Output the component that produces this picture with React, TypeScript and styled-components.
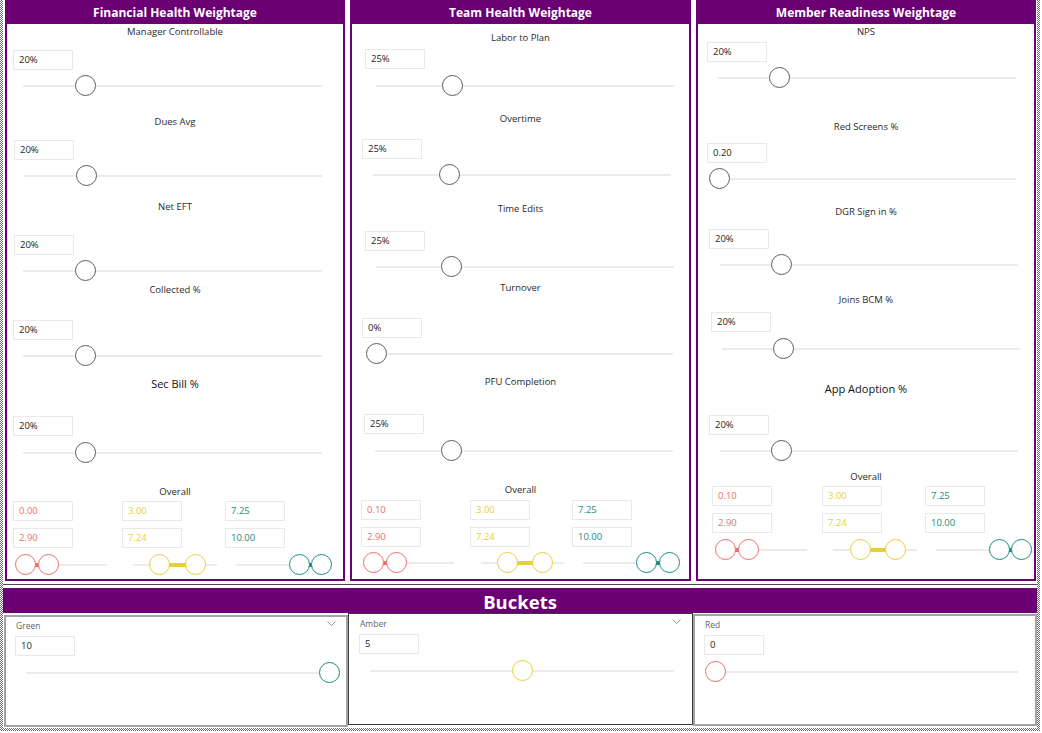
import React from "react";
import styled, { createGlobalStyle } from "styled-components";

const PURPLE = "#6b0073";
const RED = "#ec6f6b";
const YELLOW = "#e7cf3a";
const TEAL = "#1a8c80";
const FONT = `"Segoe UI", "Open Sans", "Liberation Sans", sans-serif`;

const GlobalStyle = createGlobalStyle`
  html, body {
    margin: 0;
    background: #fff;
    font-family: ${FONT};
  }
`;

type Slicer = {
  label: string;
  value: string;
  big?: boolean;
  labelY: number;
  boxX: number;
  boxY: number;
  trackY: number;
  x1: number;
  x2: number;
  thumb: number;
};

type Range = { x1: number; x2: number; lo: number; hi: number; color: string };

type Overall = {
  labelY: number;
  rows: [number, number];
  cols: number[];
  rangeY: number;
  values: [string, string][];
  ranges: Range[];
};

type PanelData = { title: string; x: number; slicers: Slicer[]; overall: Overall };

const s = (
  label: string,
  value: string,
  labelY: number,
  boxX: number,
  boxY: number,
  trackY: number,
  x1: number,
  x2: number,
  thumb: number,
  big = false
): Slicer => ({ label, value, labelY, boxX, boxY, trackY, x1, x2, thumb, big });

const panels: PanelData[] = [
  {
    title: "Financial Health Weightage",
    x: 5,
    slicers: [
      s("Manager Controllable", "20%", 32, 13, 50, 86, 23, 322, 85),
      s("Dues Avg", "20%", 122, 14, 140, 176, 24, 322, 86),
      s("Net EFT", "20%", 207, 14, 235, 271, 23, 322, 85),
      s("Collected %", "20%", 290, 13, 320, 356, 23, 322, 85),
      s("Sec Bill %", "20%", 384, 13, 416, 453, 23, 322, 85, true),
    ],
    overall: {
      labelY: 492,
      rows: [501, 528],
      cols: [13, 122, 225],
      rangeY: 565,
      values: [
        ["0.00", "2.90"],
        ["3.00", "7.24"],
        ["7.25", "10.00"],
      ],
      ranges: [
        { x1: 25, x2: 107, lo: 25, hi: 48, color: RED },
        { x1: 133, x2: 217, lo: 159, hi: 195, color: YELLOW },
        { x1: 236, x2: 299, lo: 299, hi: 321, color: TEAL },
      ],
    },
  },
  {
    title: "Team Health Weightage",
    x: 350,
    slicers: [
      s("Labor to Plan", "25%", 38, 365, 49, 86, 376, 674, 452),
      s("Overtime", "25%", 119, 362, 139, 175, 373, 671, 449),
      s("Time Edits", "25%", 209, 365, 231, 267, 376, 674, 451),
      s("Turnover", "0%", 288, 362, 318, 354, 376, 673, 376),
      s("PFU Completion", "25%", 382, 364, 414, 451, 375, 673, 451),
    ],
    overall: {
      labelY: 490,
      rows: [500, 527],
      cols: [361, 470, 572],
      rangeY: 563,
      values: [
        ["0.10", "2.90"],
        ["3.00", "7.24"],
        ["7.25", "10.00"],
      ],
      ranges: [
        { x1: 373, x2: 454, lo: 373, hi: 396, color: RED },
        { x1: 481, x2: 564, lo: 507, hi: 542, color: YELLOW },
        { x1: 583, x2: 646, lo: 646, hi: 669, color: TEAL },
      ],
    },
  },
  {
    title: "Member Readiness Weightage",
    x: 696,
    slicers: [
      s("NPS", "20%", 32, 707, 42, 78, 718, 1016, 779),
      s("Red Screens %", "0.20", 127, 707, 143, 179, 718, 1016, 719),
      s("DGR Sign in %", "20%", 212, 709, 229, 265, 720, 1018, 781),
      s("Joins BCM %", "20%", 300, 711, 312, 349, 722, 1020, 783),
      s("App Adoption %", "20%", 389, 709, 415, 451, 720, 1018, 781, true),
    ],
    overall: {
      labelY: 477,
      rows: [486, 513],
      cols: [712, 822, 925],
      rangeY: 550,
      values: [
        ["0.10", "2.90"],
        ["3.00", "7.24"],
        ["7.25", "10.00"],
      ],
      ranges: [
        { x1: 725, x2: 807, lo: 725, hi: 748, color: RED },
        { x1: 833, x2: 917, lo: 860, hi: 895, color: YELLOW },
        { x1: 936, x2: 999, lo: 999, hi: 1021, color: TEAL },
      ],
    },
  },
];

const buckets = [
  { name: "Green", value: "10", color: TEAL, pos: 1, chevron: true, top: 2, border: "2px solid #a3a3a3", width: 344 },
  { name: "Amber", value: "5", color: YELLOW, pos: 0.5, chevron: true, top: 0, border: "1px solid #3a3a3a", width: 345 },
  { name: "Red", value: "0", color: RED, pos: 0, chevron: false, top: 1, border: "2px solid #a3a3a3", width: 344 },
];

const Frame = styled.div`
  width: 1040px;
  height: 731px;
  box-sizing: border-box;
  border: 3px solid transparent;
  border-top: 0;
  background: linear-gradient(#fff, #fff) padding-box,
    repeating-conic-gradient(#707070 0 25%, #fff 0 50%) 0 0 / 2px 2px border-box;
  display: flex;
  flex-direction: column;
`;

const PanelRow = styled.div`
  display: grid;
  grid-template-columns: 340px 341px 340px;
  column-gap: 5px;
  padding: 0 1px 0 2px;
  height: 581px;
`;

const Panel = styled.section`
  border: 2px solid ${PURPLE};
  border-top: 0;
  display: flex;
  flex-direction: column;
  align-items: flex-start;
  min-width: 0;
`;

const PanelHeader = styled.h2`
  align-self: stretch;
  margin: 0 -2px;
  height: 24px;
  background: ${PURPLE};
  color: #fff;
  font-size: 12px;
  font-weight: 700;
  line-height: 25px;
  text-align: center;
`;

const Label = styled.div<{ $mt: number; $big?: boolean }>`
  align-self: stretch;
  margin-top: ${(p) => p.$mt}px;
  height: 14px;
  line-height: 14px;
  text-align: center;
  font-size: ${(p) => (p.$big ? "11px" : "9.5px")};
  color: ${(p) => (p.$big ? "#111" : "#2b2b2b")};
`;

const ValueBox = styled.div<{ $mt?: number; $ml: number; $color?: string }>`
  flex: none;
  box-sizing: border-box;
  width: 60px;
  height: 20px;
  margin-top: ${(p) => p.$mt ?? 0}px;
  margin-left: ${(p) => p.$ml}px;
  padding-left: 5px;
  border: 1px solid #e9e9e9;
  font-size: 9.5px;
  line-height: 18px;
  color: ${(p) => p.$color ?? "#252423"};
`;

const BoxRow = styled.div<{ $mt: number }>`
  display: flex;
  margin-top: ${(p) => p.$mt}px;
`;

const Track = styled.div<{ $mt: number; $ml: number; $w: number }>`
  position: relative;
  flex: none;
  width: ${(p) => p.$w}px;
  height: 22px;
  margin-top: ${(p) => p.$mt}px;
  margin-left: ${(p) => p.$ml}px;

  &::before {
    content: "";
    position: absolute;
    left: 0;
    right: 0;
    top: 10px;
    height: 2px;
    background: #ebebeb;
  }
`;

const Thumb = styled.span<{ $color?: string }>`
  position: absolute;
  top: 0;
  width: 21px;
  height: 21px;
  box-sizing: border-box;
  border-radius: 50%;
  border: 1.5px solid ${(p) => p.$color ?? "#5c5c5c"};
  background: #fff;
`;

const RangeRow = styled.div<{ $mt: number }>`
  display: flex;
  height: 22px;
  margin-top: ${(p) => p.$mt}px;
`;

const RangeGroup = styled.div<{ $ml: number; $w: number }>`
  position: relative;
  flex: none;
  width: ${(p) => p.$w}px;
  margin-left: ${(p) => p.$ml}px;
`;

const RangeLine = styled.span<{ $color?: string; $thick?: boolean }>`
  position: absolute;
  top: ${(p) => (p.$thick ? 9 : 10)}px;
  height: ${(p) => (p.$thick ? 4 : 2)}px;
  background: ${(p) => p.$color ?? "#ebebeb"};
`;

const Divider = styled.div`
  height: 1px;
  margin: 3px 0 3px;
  background: #4a4a4a;
`;

const BucketBar = styled.h2`
  margin: 0;
  height: 25px;
  background: ${PURPLE};
  color: #fff;
  font-size: 18.5px;
  font-weight: 700;
  line-height: 28px;
  text-align: center;
`;

const BucketRow = styled.div`
  display: flex;
  align-items: flex-start;
  padding-left: 1px;
`;

const BucketCard = styled.div<{ $mt: number; $border: string; $w: number }>`
  position: relative;
  flex: none;
  width: ${(p) => p.$w}px;
  height: 112px;
  box-sizing: border-box;
  margin-top: ${(p) => p.$mt}px;
  padding: 5px 12px 0 11px;
  display: flex;
  flex-direction: column;
  align-items: flex-start;

  &::after {
    content: "";
    position: absolute;
    inset: 0;
    border: ${(p) => p.$border};
    pointer-events: none;
  }
`;

const CardHead = styled.div`
  align-self: stretch;
  display: flex;
  justify-content: space-between;
  align-items: center;
  height: 10px;
  font-size: 8.5px;
  color: #666;
`;

const CardLabel = styled.span`
  padding-left: 1px;
`;

const Chevron = styled.svg`
  width: 9px;
  height: 5px;
  margin-top: -4px;
`;

const CardTrack = styled.div`
  position: relative;
  align-self: stretch;
  height: 22px;
  margin: 6px 7px 0 11px;

  &::before {
    content: "";
    position: absolute;
    left: 0;
    right: 0;
    top: 10px;
    height: 2px;
    background: #ebebeb;
  }
`;

const WeightPanel: React.FC<{ panel: PanelData }> = ({ panel }) => {
  const inner = panel.x + 2;
  let y = 24;
  const items: React.ReactNode[] = [];

  panel.slicers.forEach((sl, i) => {
    items.push(
      <Label key={`l${i}`} $mt={sl.labelY - 7 - y} $big={sl.big}>
        {sl.label}
      </Label>
    );
    y = sl.labelY + 7;
    items.push(
      <ValueBox key={`b${i}`} $mt={sl.boxY - y} $ml={sl.boxX - inner}>
        {sl.value}
      </ValueBox>
    );
    y = sl.boxY + 20;
    items.push(
      <Track key={`t${i}`} $mt={sl.trackY - 11 - y} $ml={sl.x1 - inner} $w={sl.x2 - sl.x1}>
        <Thumb style={{ left: sl.thumb - sl.x1 - 10.5 }} />
      </Track>
    );
    y = sl.trackY + 11;
  });

  const o = panel.overall;
  items.push(
    <Label key="ol" $mt={o.labelY - 7 - y}>
      Overall
    </Label>
  );
  y = o.labelY + 7;
  const colors = [RED, YELLOW, TEAL];
  o.rows.forEach((rowY, r) => {
    items.push(
      <BoxRow key={`r${r}`} $mt={rowY - y}>
        {o.cols.map((cx, c) => (
          <ValueBox key={c} $ml={cx - (c === 0 ? inner : o.cols[c - 1] + 60)} $color={colors[c]}>
            {o.values[c][r]}
          </ValueBox>
        ))}
      </BoxRow>
    );
    y = rowY + 20;
  });

  let prevRight = inner;
  items.push(
    <RangeRow key="rr" $mt={o.rangeY - 11 - y}>
      {o.ranges.map((rg, i) => {
        const gl = Math.min(rg.x1, rg.lo - 10.5);
        const gr = Math.max(rg.x2, rg.hi + 10.5);
        const ml = gl - prevRight;
        prevRight = gr;
        return (
          <RangeGroup key={i} $ml={ml} $w={gr - gl}>
            <RangeLine style={{ left: rg.x1 - gl, width: Math.max(rg.x2, rg.hi) - rg.x1 }} />
            <RangeLine $thick $color={rg.color} style={{ left: rg.lo - gl, width: rg.hi - rg.lo }} />
            <Thumb $color={rg.color} style={{ left: rg.lo - gl - 10.5 }} />
            <Thumb $color={rg.color} style={{ left: rg.hi - gl - 10.5 }} />
          </RangeGroup>
        );
      })}
    </RangeRow>
  );

  return (
    <Panel>
      <PanelHeader>{panel.title}</PanelHeader>
      {items}
    </Panel>
  );
};

export default function App() {
  return (
    <>
      <GlobalStyle />
      <Frame>
        <PanelRow>
          {panels.map((p) => (
            <WeightPanel key={p.title} panel={p} />
          ))}
        </PanelRow>
        <Divider />
        <BucketBar>Buckets</BucketBar>
        <BucketRow>
          {buckets.map((b) => (
            <BucketCard key={b.name} $mt={b.top} $border={b.border} $w={b.width}>
              <CardHead>
                <CardLabel>{b.name}</CardLabel>
                {b.chevron && (
                  <Chevron viewBox="0 0 9 5">
                    <polyline points="0.5,0.5 4.5,4.5 8.5,0.5" fill="none" stroke="#8a8a8a" strokeWidth="0.9" />
                  </Chevron>
                )}
              </CardHead>
              <ValueBox $mt={6} $ml={0}>
                {b.value}
              </ValueBox>
              <CardTrack>
                <Thumb $color={b.color} style={{ left: `calc(${b.pos * 100}% - 10.5px)` }} />
              </CardTrack>
            </BucketCard>
          ))}
        </BucketRow>
      </Frame>
    </>
  );
}
